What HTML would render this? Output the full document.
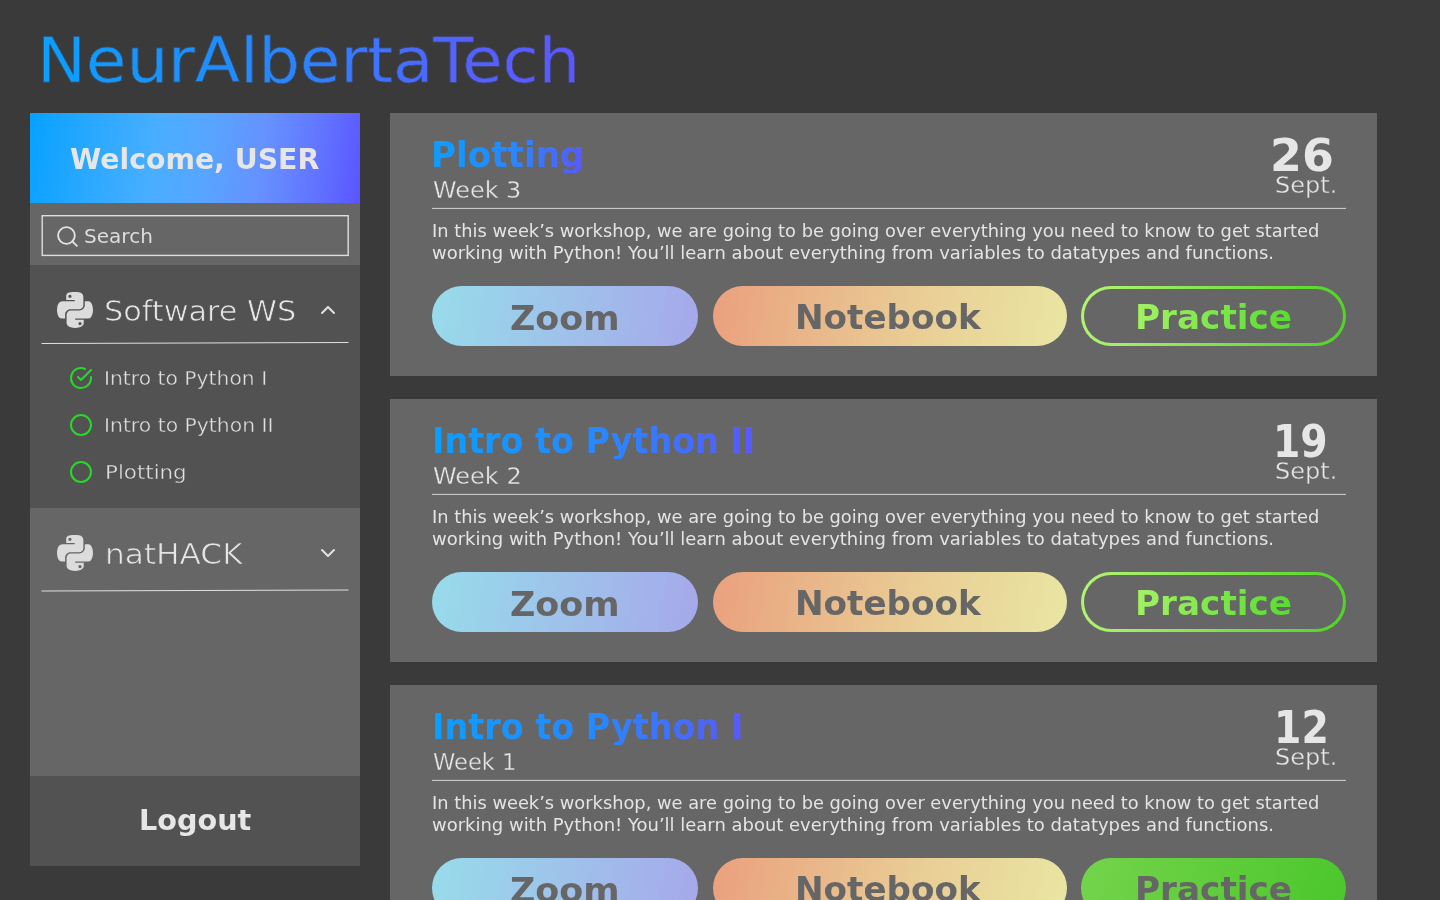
<!DOCTYPE html>
<html lang="en">
<head>
<meta charset="utf-8">
<title>NeurAlbertaTech</title>
<style>
html,body{margin:0;padding:0;}
body{width:1440px;height:900px;overflow:hidden;background:#3a3a3a;position:relative;font-family:'DejaVu Sans','Liberation Sans',sans-serif;color:#e4e4e4;}
h1,h2,p,ul,li{margin:0;padding:0;font-weight:400;list-style:none;}
.t{position:absolute;white-space:nowrap;line-height:1;transform-origin:0 50%;display:block;margin:0;font-weight:400;}
.t.b{font-weight:700;}
.gt,.gb,.gg{-webkit-background-clip:text;background-clip:text;color:transparent;}
.gt{background-image:linear-gradient(90deg,#0aa0ff 0%,#2c82ff 50%,#5462ff 78%,#5a58ff 100%);-webkit-text-stroke:0.5px #3a3a3a;}
.gb{background-image:linear-gradient(100deg,#0a9fff 0%,#2a86ff 55%,#5a58ff 100%);}
.gg{background-image:linear-gradient(100deg,#a4f264 0%,#56dc30 100%);}
.ic{position:absolute;display:block;overflow:visible;}
.side{position:absolute;left:30px;top:113px;width:330px;height:753px;}
.side>*{position:absolute;left:0;width:330px;}
.welcome{top:0;height:90px;background:linear-gradient(98deg,#06a1ff 0%,#28a8ff 18%,#49aeff 38%,#58a4ff 54%,#6691ff 70%,#6274ff 86%,#5a55ff 100%);}
.searchwrap{top:90px;height:62px;background:#666;}
.sec1{top:152px;height:243px;background:#525252;}
.sec2{top:395px;height:268px;background:#666;}
.logout{top:663px;height:90px;background:#525252;}
.card{position:absolute;left:390px;width:987px;height:263px;background:#666;}
.hr{position:absolute;left:42px;top:95px;width:913.5px;height:1px;background:#c8c8c8;box-shadow:0 -1px 0 rgba(200,200,200,.12);}
.btn{position:absolute;top:173px;height:60px;border-radius:30px;box-sizing:border-box;display:block;}
.zoom{left:42px;width:265.5px;background:linear-gradient(100deg,#97dcea 0%,#a6a8ea 100%);}
.note{left:322.5px;width:354.5px;background:linear-gradient(100deg,#eaa07e 0%,#e9cf96 60%,#e9e6a2 100%);}
.prac{left:690.5px;width:265px;}
.prac.out{background:linear-gradient(100deg,#b4f474 0%,#4fd424 100%);}
.prac.out i{position:absolute;left:3px;top:3px;right:3px;bottom:3px;border-radius:27px;background:#666;display:block;}
.prac.fill{background:linear-gradient(110deg,#74d44b 0%,#4ac62b 100%);}
</style>
</head>
<body>
<header>
<h1 class="t gt" style="left:36.68px;top:30px;font-size:62px;transform:scaleX(1.0588);">NeurAlbertaTech</h1>
</header>
<aside class="side">
<div class="welcome">
<span class="t b" style="left:40.46px;top:33px;font-size:28.5px;transform:scaleX(0.9936);color:#e6e6e6;">Welcome, USER</span>
</div>
<div class="searchwrap">
<svg class="ic" style="left:10px;top:10px" width="312" height="46" viewBox="0 0 312 46"><rect x="2.2" y="2.7" width="306" height="39.7" fill="none" stroke="#dedede" stroke-width="1.4"/></svg>
<svg class="ic" style="left:24.7px;top:20.5px" width="25" height="25" viewBox="0 0 24 24" fill="none" stroke="#e4e4e4" stroke-width="1.75" stroke-linecap="round" stroke-linejoin="round"><circle cx="11" cy="11" r="8"/><line x1="21" y1="21" x2="16.65" y2="16.65"/></svg>
<span class="t" style="left:53.83px;top:24px;font-size:19.5px;transform:scaleX(1.0284);color:#dcdcdc;">Search</span>
</div>
<nav class="sec1">
<svg class="ic" style="left:27px;top:27px" width="36" height="36" viewBox="0 32 448 448"><path fill="#dcdcdc" d="M439.8 200.5c-7.7-30.9-22.3-54.2-53.4-54.2h-40.1v47.4c0 36.8-31.2 67.8-66.8 67.8H172.7c-29.2 0-53.4 25-53.4 54.3v101.8c0 29 25.2 46 53.4 54.3 33.8 9.9 66.3 11.7 106.8 0 26.9-7.8 53.4-23.5 53.4-54.3v-40.7H226.2v-13.6h160.2c31.1 0 42.6-21.7 53.4-54.2 11.2-33.5 10.7-65.7 0-108.6zM286.2 404c11.1 0 20.1 9.1 20.1 20.3 0 11.3-9 20.4-20.1 20.4-11 0-20.1-9.2-20.1-20.4.1-11.3 9.1-20.3 20.1-20.3zM167.8 248.1h106.8c29.7 0 53.4-24.5 53.4-54.3V91.9c0-29-24.4-50.7-53.4-55.6-35.8-5.9-74.7-5.6-106.8.1-45.2 8-53.4 24.7-53.4 55.6v40.7h106.9v13.6h-147c-31.1 0-58.3 18.7-66.8 54.2-9.8 40.7-10.2 66.1 0 108.6 7.6 31.6 25.7 54.2 56.8 54.2H101v-48.8c0-35.3 30.5-66.4 66.8-66.4zm-6.7-142.6c-11.1 0-20.1-9.1-20.1-20.3.1-11.3 9-20.4 20.1-20.4 11 0 20.1 9.2 20.1 20.4s-9 20.3-20.1 20.3z"/></svg>
<span class="t" style="left:74.42px;top:33px;font-size:28.5px;transform:scaleX(1.0621);color:#e6e6e6;-webkit-text-stroke:0.7px #525252;">Software WS</span>
<svg class="ic" style="left:286px;top:33px" width="24" height="24" viewBox="0 0 24 24" fill="none" stroke="#e0e0e0" stroke-width="2" stroke-linecap="round" stroke-linejoin="round"><polyline points="18 15 12 9 6 15"/></svg>
<svg class="ic" style="left:0px;top:65px" width="330" height="20" viewBox="0 0 330 20"><line x1="11.5" y1="13.5" x2="318.5" y2="12.5" stroke="#e0e0e0" stroke-width="1"/></svg>
<svg class="ic" style="left:39px;top:101px" width="24" height="24" viewBox="0 0 24 24" fill="none" stroke="#27d927" stroke-width="2" stroke-linecap="round" stroke-linejoin="round"><path d="M22 11.08V12a10 10 0 1 1-5.93-9.14"/><polyline points="22 4 12 14.01 9 11.01"/></svg>
<span class="t" style="left:74.46px;top:104px;font-size:19.5px;transform:scaleX(1.0404);color:#e0e0e0;-webkit-text-stroke:0.4px #525252;">Intro to Python I</span>
<svg class="ic" style="left:39px;top:148px" width="24" height="24" viewBox="0 0 24 24" fill="none" stroke="#27d927" stroke-width="2" stroke-linecap="round" stroke-linejoin="round"><circle cx="12" cy="12" r="10"/></svg>
<span class="t" style="left:74.46px;top:151px;font-size:19.5px;transform:scaleX(1.043);color:#e0e0e0;-webkit-text-stroke:0.4px #525252;">Intro to Python II</span>
<svg class="ic" style="left:39px;top:195px" width="24" height="24" viewBox="0 0 24 24" fill="none" stroke="#27d927" stroke-width="2" stroke-linecap="round" stroke-linejoin="round"><circle cx="12" cy="12" r="10"/></svg>
<span class="t" style="left:74.91px;top:198px;font-size:19.5px;transform:scaleX(1.0955);color:#e0e0e0;-webkit-text-stroke:0.4px #525252;">Plotting</span>
</nav>
<nav class="sec2">
<svg class="ic" style="left:27px;top:27px" width="36" height="36" viewBox="0 32 448 448"><path fill="#dcdcdc" d="M439.8 200.5c-7.7-30.9-22.3-54.2-53.4-54.2h-40.1v47.4c0 36.8-31.2 67.8-66.8 67.8H172.7c-29.2 0-53.4 25-53.4 54.3v101.8c0 29 25.2 46 53.4 54.3 33.8 9.9 66.3 11.7 106.8 0 26.9-7.8 53.4-23.5 53.4-54.3v-40.7H226.2v-13.6h160.2c31.1 0 42.6-21.7 53.4-54.2 11.2-33.5 10.7-65.7 0-108.6zM286.2 404c11.1 0 20.1 9.1 20.1 20.3 0 11.3-9 20.4-20.1 20.4-11 0-20.1-9.2-20.1-20.4.1-11.3 9.1-20.3 20.1-20.3zM167.8 248.1h106.8c29.7 0 53.4-24.5 53.4-54.3V91.9c0-29-24.4-50.7-53.4-55.6-35.8-5.9-74.7-5.6-106.8.1-45.2 8-53.4 24.7-53.4 55.6v40.7h106.9v13.6h-147c-31.1 0-58.3 18.7-66.8 54.2-9.8 40.7-10.2 66.1 0 108.6 7.6 31.6 25.7 54.2 56.8 54.2H101v-48.8c0-35.3 30.5-66.4 66.8-66.4zm-6.7-142.6c-11.1 0-20.1-9.1-20.1-20.3.1-11.3 9-20.4 20.1-20.4 11 0 20.1 9.2 20.1 20.4s-9 20.3-20.1 20.3z"/></svg>
<span class="t" style="left:74.73px;top:33px;font-size:28.5px;transform:scaleX(1.0944);color:#e6e6e6;-webkit-text-stroke:0.7px #666;">natHACK</span>
<svg class="ic" style="left:286px;top:33px" width="24" height="24" viewBox="0 0 24 24" fill="none" stroke="#e0e0e0" stroke-width="2" stroke-linecap="round" stroke-linejoin="round"><polyline points="6 9 12 15 18 9"/></svg>
<svg class="ic" style="left:0px;top:72px" width="330" height="20" viewBox="0 0 330 20"><line x1="11.5" y1="11" x2="318.5" y2="10" stroke="#e0e0e0" stroke-width="1"/></svg>
</nav>
<div class="logout">
<span class="t b" style="left:108.72px;top:31px;font-size:28.5px;transform:scaleX(1.0061);color:#e6e6e6;">Logout</span>
</div>
</aside>
<main>
<article class="card" style="top:113px">
<h2 class="t b gb" style="left:41.35px;top:24px;font-size:35.5px;transform:scaleX(0.9632);">Plotting</h2>
<p class="t" style="left:43.47px;top:66px;font-size:23px;transform:scaleX(1.0392);color:#e6e6e6;-webkit-text-stroke:0.35px #666;">Week 3</p>
<span class="t b" style="left:880.22px;top:20px;font-size:45px;transform:scaleX(1.0182);color:#e6e6e6;">26</span>
<span class="t" style="left:885.15px;top:61px;font-size:23px;transform:scaleX(1.044);color:#e6e6e6;-webkit-text-stroke:0.35px #666;">Sept.</span>
<div class="hr"></div>
<p class="t" style="left:41.64px;top:109px;font-size:18px;transform:scaleX(0.9897);">In this week’s workshop, we are going to be going over everything you need to know to get started</p>
<p class="t" style="left:42.40px;top:131px;font-size:18px;transform:scaleX(0.9978);">working with Python! You’ll learn about everything from variables to datatypes and functions.</p>
<a class="btn zoom"><span class="t b" style="left:77.94px;top:16px;font-size:33.5px;transform:scaleX(1.0417);color:#666;">Zoom</span></a>
<a class="btn note"><span class="t b" style="left:82.28px;top:15px;font-size:33.5px;transform:scaleX(1.0203);color:#666;">Notebook</span></a>
<a class="btn prac out"><i></i><span class="t b gg" style="left:54.06px;top:15px;font-size:33.5px;transform:scaleX(1.0223);">Practice</span></a>
</article>
<article class="card" style="top:399px">
<h2 class="t b gb" style="left:41.76px;top:24px;font-size:35.5px;transform:scaleX(0.94);">Intro to Python II</h2>
<p class="t" style="left:43.47px;top:66px;font-size:23px;transform:scaleX(1.0438);color:#e6e6e6;-webkit-text-stroke:0.35px #666;">Week 2</p>
<span class="t b" style="left:883.29px;top:20px;font-size:45px;transform:scaleX(0.8738);color:#e6e6e6;">19</span>
<span class="t" style="left:885.15px;top:61px;font-size:23px;transform:scaleX(1.044);color:#e6e6e6;-webkit-text-stroke:0.35px #666;">Sept.</span>
<div class="hr"></div>
<p class="t" style="left:41.64px;top:109px;font-size:18px;transform:scaleX(0.9897);">In this week’s workshop, we are going to be going over everything you need to know to get started</p>
<p class="t" style="left:42.40px;top:131px;font-size:18px;transform:scaleX(0.9978);">working with Python! You’ll learn about everything from variables to datatypes and functions.</p>
<a class="btn zoom"><span class="t b" style="left:77.94px;top:16px;font-size:33.5px;transform:scaleX(1.0417);color:#666;">Zoom</span></a>
<a class="btn note"><span class="t b" style="left:82.28px;top:15px;font-size:33.5px;transform:scaleX(1.0203);color:#666;">Notebook</span></a>
<a class="btn prac out"><i></i><span class="t b gg" style="left:54.06px;top:15px;font-size:33.5px;transform:scaleX(1.0223);">Practice</span></a>
</article>
<article class="card" style="top:685px">
<h2 class="t b gb" style="left:41.76px;top:24px;font-size:35.5px;transform:scaleX(0.9414);">Intro to Python I</h2>
<p class="t" style="left:42.65px;top:66px;font-size:23px;transform:scaleX(0.9828);color:#e6e6e6;-webkit-text-stroke:0.35px #666;">Week 1</p>
<span class="t b" style="left:884.19px;top:20px;font-size:45px;transform:scaleX(0.8743);color:#e6e6e6;">12</span>
<span class="t" style="left:885.15px;top:61px;font-size:23px;transform:scaleX(1.044);color:#e6e6e6;-webkit-text-stroke:0.35px #666;">Sept.</span>
<div class="hr"></div>
<p class="t" style="left:41.64px;top:109px;font-size:18px;transform:scaleX(0.9897);">In this week’s workshop, we are going to be going over everything you need to know to get started</p>
<p class="t" style="left:42.40px;top:131px;font-size:18px;transform:scaleX(0.9978);">working with Python! You’ll learn about everything from variables to datatypes and functions.</p>
<a class="btn zoom"><span class="t b" style="left:77.94px;top:16px;font-size:33.5px;transform:scaleX(1.0417);color:#666;">Zoom</span></a>
<a class="btn note"><span class="t b" style="left:82.28px;top:15px;font-size:33.5px;transform:scaleX(1.0203);color:#666;">Notebook</span></a>
<a class="btn prac fill"><span class="t b" style="left:54.06px;top:15px;font-size:33.5px;transform:scaleX(1.0223);color:#666;">Practice</span></a>
</article>
</main>
</body>
</html>
